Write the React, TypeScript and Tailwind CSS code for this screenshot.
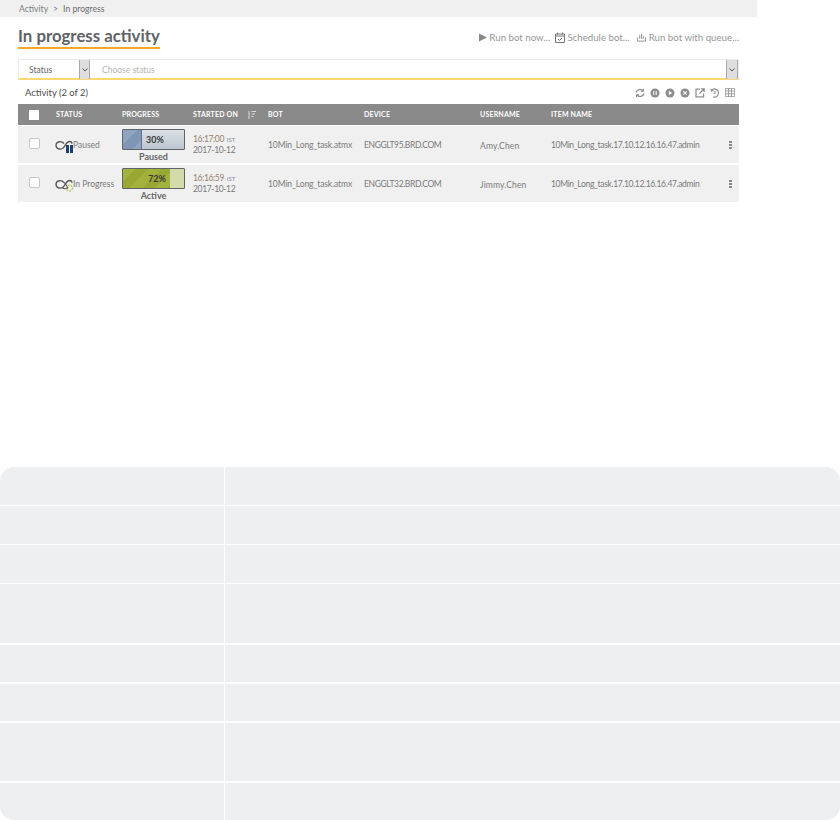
import React from "react";

const Loop = ({ paused }: { paused?: boolean }) => (
  <svg width="22" height="16" viewBox="0 0 22 16" className="shrink-0">
    <path d="M9 6.500C6.500 3.800 1.500 4 1 8c-.3 3.500 3.500 4.800 6.500 3.500C10 10.300 11 4.500 14.500 4.500c1.700 0 2.500 1 2.500 2.300" fill="none" stroke="#555" strokeWidth="1.300" />
    {paused ? (
      <g fill="#1d3f6e">
        <rect x="11" y="8" width="3" height="8" />
        <rect x="15" y="8" width="3" height="8" />
      </g>
    ) : (
      <g fill="none">
        <path d="M9 6.500c2 1.500 3 3.500 4 5.500" stroke="#666" strokeWidth="1.200" />
        <path d="M7 11.500c2 1.500 4 1.500 6 .5" stroke="#555" strokeWidth="1.100" />
        <circle cx="14.500" cy="12" r="3" stroke="#b5c24a" strokeWidth="1.200" strokeDasharray="2 1" />
      </g>
    )}
  </svg>
);

const Progress = ({ pct, fill, label, active }: { pct: number; fill: number; label: string; active?: boolean }) => (
  <div className="w-[63px]">
    <div
      className={`relative h-[21px] border border-[#5f6468] rounded-[1px] ${active ? "bg-[#d4dbaa]" : "bg-[linear-gradient(#dbe0e6,#bcc5cf)]"}`}
    >
      <div
        className={`h-full ${active ? "bg-[repeating-linear-gradient(135deg,#a3b23a_0,#a3b23a_9px,#98a833_9px,#98a833_18px)]" : "bg-[repeating-linear-gradient(135deg,#8ea4bf_0,#8ea4bf_10px,#7f97b5_10px,#7f97b5_20px)] border-r border-[#5f7390]"}`}
        style={{ width: `${fill}px` }}
      />
      <span className={`absolute top-[3px] text-[9px] leading-[13px] font-bold text-[#3a3a3a] ${active ? "left-[25px]" : "left-[23px]"}`}>
        {pct}%
      </span>
    </div>
    <div className="mt-[1px] text-center text-[9px] leading-[12px] font-bold text-[#666]">{label}</div>
  </div>
);

const Row = ({ status, paused, pct, fill, label, active, time, device, user, cls }: any) => (
  <div className={`flex items-start h-[37px] bg-[#f0f0f0] text-[8.5px] text-[#7a7a7a] ${cls}`}>
    <div className="w-[37px] shrink-0 pt-[12px] pl-[11px]">
      <div className="w-[11px] h-[11px] bg-white border border-[#c8c8c8] rounded-[2px]" />
    </div>
    <div className="w-[67px] shrink-0 pt-[11px] flex items-start">
      <Loop paused={paused} />
      <span className="ml-[-4px] mt-[1px] text-[8.500px] leading-[14px] whitespace-nowrap">{status}</span>
    </div>
    <div className="w-[71px] shrink-0 pt-[3px]">
      <Progress pct={pct} fill={fill} label={label} active={active} />
    </div>
    <div className="w-[75px] shrink-0 pt-[8px] text-[8.5px] leading-[10px] tracking-[-0.35px]">
      <div className="text-[#96836f] whitespace-nowrap">
        {time} <span className="ml-[1px] text-[6px] tracking-normal text-[#7d8a96]">IST</span>
      </div>
      <div>2017-10-12</div>
    </div>
    <div className="w-[96px] shrink-0 pt-[12px] leading-[14px] whitespace-nowrap tracking-[-0.1px]">10Min_Long_task.atmx</div>
    <div className="w-[116px] shrink-0 pt-[12px] leading-[14px] whitespace-nowrap tracking-[-0.38px]">{device}</div>
    <div className="w-[71px] shrink-0 pt-[13px] leading-[14px] whitespace-nowrap tracking-[0.15px]">{user}</div>
    <div className="w-[178px] shrink-0 pt-[12px] leading-[14px] whitespace-nowrap tracking-[-0.34px]">10Min_Long_task.17.10.12.16.16.47.admin</div>
    <div className="flex flex-col gap-[1px] pt-[15px]">
      <i className="block w-[3px] h-[2px] bg-[#888]" />
      <i className="block w-[3px] h-[2px] bg-[#888]" />
      <i className="block w-[3px] h-[2px] bg-[#888]" />
    </div>
  </div>
);

const ToolIcons = () => (
  <div className="flex items-center gap-[5px] mr-[4px] mt-[1px] text-[#8d8d8d]">
    <svg width="10" height="10" viewBox="0 0 10 10" fill="none" stroke="#8d8d8d" strokeWidth="1.300">
      <path d="M1 4.500A4 4 0 0 1 8 3M9 5.500A4 4 0 0 1 2 7" />
      <path d="M8.500 .8V3.300H6M1.500 9.200V6.700H4" strokeWidth="1" />
    </svg>
    <svg width="10" height="10" viewBox="0 0 10 10"><circle cx="5" cy="5" r="4.500" fill="#8d8d8d" /><path d="M3.800 3v4M6.200 3v4" stroke="#fff" strokeWidth="1" /></svg>
    <svg width="10" height="10" viewBox="0 0 10 10"><circle cx="5" cy="5" r="4.500" fill="#8d8d8d" /><path d="M3.800 2.800 7.200 5 3.800 7.200z" fill="#fff" /></svg>
    <svg width="10" height="10" viewBox="0 0 10 10"><circle cx="5" cy="5" r="4.500" fill="#8d8d8d" /><path d="M3.300 3.300l3.400 3.400M6.700 3.300 3.300 6.700" stroke="#fff" strokeWidth="1.100" /></svg>
    <svg width="10" height="10" viewBox="0 0 10 10" fill="none" stroke="#8d8d8d" strokeWidth="1.200">
      <path d="M5 1.200H1v7.600h7.600V5.500M4.500 5.500 9 1M6 .8h3.200V4" />
    </svg>
    <svg width="10" height="10" viewBox="0 0 10 10" fill="none" stroke="#8d8d8d" strokeWidth="1.100">
      <path d="M1.500 2.200A4 4 0 1 1 3 8.800M.9 .9 1.500 3 3.500 2.500M5 3v2.300H3.500" />
    </svg>
    <svg width="10" height="9" viewBox="0 0 10 9" fill="none" stroke="#8d8d8d" strokeWidth=".8">
      <path d="M.4.4h9.200v8.200H.4zM.4 3h9.200M.4 5.800h9.200M3.500.4v8.200M6.500.4v8.200" />
    </svg>
  </div>
);

const Chevron = () => (
  <svg width="6" height="4" viewBox="0 0 6 4" fill="none" stroke="#555" strokeWidth="1"><path d="M.5.5 3 3 5.500.5" /></svg>
);

const bottomRows = [
  ["h-[38px]", "rounded-tl-[14px]", "rounded-tr-[14px]", "mb-[1px]"],
  ["h-[38px]", "", "", "mb-[1px]"],
  ["h-[38px]", "", "", "mb-[1px]"],
  ["h-[59px]", "", "", "mb-[2px]"],
  ["h-[37px]", "", "", "mb-[2px]"],
  ["h-[37px]", "", "", "mb-[2px]"],
  ["h-[58px]", "", "", "mb-[2px]"],
  ["h-[37px]", "rounded-bl-[14px]", "rounded-br-[14px]", ""],
];

export default function App() {
  return (
    <div className="w-[840px] h-[820px] overflow-hidden bg-white font-['Lato','Open_Sans',sans-serif]">
      <div className="w-[757px] h-[17px] bg-[#f0f0f0] pl-[19px] text-[8.6px] leading-[18px] text-[#7b8084]">
        Activity<span className="mx-[5px] text-[#777]">&gt;</span><span className="text-[#6d6d6d]">In progress</span>
      </div>

      <div className="w-[739px] ml-[18px] mt-[8px] flex justify-between items-start h-[34px]">
        <div className="inline-block border-b-2 border-[#f7a823] h-[24px] text-[16.800px] leading-[22px] font-bold text-[#5e6266] whitespace-nowrap">
          In progress activity
        </div>
        <div className="flex items-center text-[9.700px] text-[#969696] mt-[5px] mr-[18px] leading-[14px]">
          <svg width="8" height="9" viewBox="0 0 8 9" className="mr-[2px]"><path d="M0 .5 8 4.500 0 8.500z" fill="#888" /></svg>
          <span>Run bot now...</span>
          <svg width="10" height="11" viewBox="0 0 10 11" fill="none" stroke="#777" strokeWidth="1" className="ml-[5px] mr-[2px]">
            <path d="M.5 2h9v8.500h-9zM.5 4h9M2.500 .5V2.500M7.500 .5V2.500" />
            <path d="M3 7l1.500 1.500L7 6" />
          </svg>
          <span>Schedule bot...</span>
          <svg width="9" height="9" viewBox="0 0 10 9" className="ml-[7px] mr-[3px]" fill="none" stroke="#8a8a8a">
            <path d="M.5 4.500V8.500h9V4.500M3 6V1.500M5 6V.5M7 6V2.500" />
          </svg>
          <span>Run bot with queue...</span>
        </div>
      </div>

      <div className="w-[721px] ml-[18px] h-[21px] flex border border-[#ececec] border-b-2 border-b-[#fbd871] bg-white text-[8.5px] leading-[20px]">
        <div className="w-[60px] pl-[10px] text-[#666]">Status</div>
        <div className="w-[11px] h-[19px] bg-[#dedede] border-x border-[#aaa] flex items-center justify-center"><Chevron /></div>
        <div className="flex-1 pl-[12px] text-[#b5b5b5]">Choose status</div>
        <div className="w-[12px] h-[19px] bg-[#dedede] border-x border-[#aaa] flex items-center justify-center"><Chevron /></div>
      </div>

      <div className="w-[721px] ml-[18px] h-[24px] flex justify-between items-center pl-[7px] text-[9.400px] text-[#4d4d4d]">
        <span className="mt-[2px]">Activity (2 of 2)</span>
        <ToolIcons />
      </div>

      <div className="w-[721px] ml-[18px]">
        <div className="flex items-center h-[21px] mb-[1px] bg-[#8a8a8a] text-[7px] font-bold tracking-[0.2px] text-white">
          <div className="w-[38px] pl-[11px]"><div className="w-[10px] h-[10px] bg-white" /></div>
          <div className="w-[66px]">STATUS</div>
          <div className="w-[71px]">PROGRESS</div>
          <div className="w-[75px] flex items-center whitespace-nowrap">
            STARTED ON
            <svg width="8" height="8" viewBox="0 0 8 8" className="ml-[10px]" fill="none" stroke="#ddd" strokeWidth="1"><path d="M1 0v8M3.500 .5H8M3.500 3H7M3.500 5.500H5.500" /></svg>
          </div>
          <div className="w-[96px]">BOT</div>
          <div className="w-[116px]">DEVICE</div>
          <div className="w-[71px]">USERNAME</div>
          <div>ITEM NAME</div>
        </div>
        <Row status="Paused" paused pct={30} fill={19} label="Paused" time="16:17:00" device="ENGGLT95.BRD.COM" user="Amy.Chen" cls="mb-[2px]" />
        <Row status="In Progress" pct={72} fill={47} label="Active" active time="16:16:59" device="ENGGLT32.BRD.COM" user="Jimmy.Chen" cls="" />
      </div>

      <div className="mt-[265px]">
        {bottomRows.map(([h, l, r, mb], i) => (
          <div key={i} className={`flex ${h} ${mb}`}>
            <div className={`w-[224px] bg-[#eeeff1] ${l}`} />
            <div className={`ml-[1px] flex-1 bg-[#eeeff1] ${r}`} />
          </div>
        ))}
      </div>
    </div>
  );
}
